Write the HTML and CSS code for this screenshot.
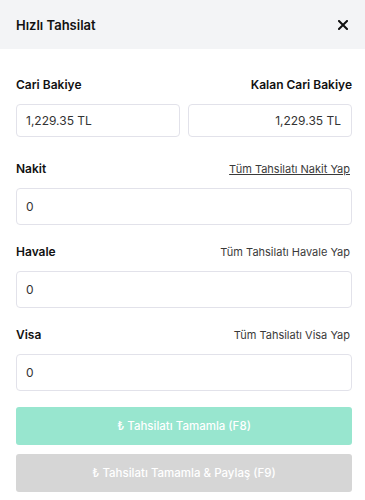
FILE: index.html
```html
<!DOCTYPE html>
<html lang="tr">
<head>
    <meta charset="UTF-8">
    <meta name="viewport" content="width=device-width, initial-scale=1.0">
    <title>Hızlı Tahsilat</title>
    <link rel="stylesheet" href="styles.css">
</head>
<body>
    <div class="modal">
        <div class="modal-header">
            <span class="modal-title">Hızlı Tahsilat</span>
            <button class="close-button" aria-label="Kapat">
                <svg width="10" height="10" viewBox="0 0 10 10">
                    <path d="M1 1 L9 9 M9 1 L1 9" stroke="#111" stroke-width="2" stroke-linecap="square"/>
                </svg>
            </button>
        </div>

        <div class="modal-body">
            <div class="balance-row">
                <div class="balance-col">
                    <div class="field-label">Cari Bakiye</div>
                    <input type="text" class="balance-input" value="1,229.35 TL" readonly>
                </div>
                <div class="balance-col align-right">
                    <div class="field-label">Kalan Cari Bakiye</div>
                    <input type="text" class="balance-input text-right" value="1,229.35 TL" readonly>
                </div>
            </div>

            <div class="field-group first">
                <div class="field-head">
                    <span class="field-label">Nakit</span>
                    <a href="#" class="field-link underlined">Tüm Tahsilatı Nakit Yap</a>
                </div>
                <input type="text" class="amount-input" value="0">
            </div>

            <div class="field-group">
                <div class="field-head">
                    <span class="field-label">Havale</span>
                    <a href="#" class="field-link">Tüm Tahsilatı Havale Yap</a>
                </div>
                <input type="text" class="amount-input" value="0">
            </div>

            <div class="field-group">
                <div class="field-head">
                    <span class="field-label">Visa</span>
                    <a href="#" class="field-link">Tüm Tahsilatı Visa Yap</a>
                </div>
                <input type="text" class="amount-input" value="0">
            </div>

            <div class="actions">
                <button class="action-button complete-button" disabled>₺ Tahsilatı Tamamla (F8)</button>
                <button class="action-button share-button" disabled>₺ Tahsilatı Tamamla &amp; Paylaş (F9)</button>
            </div>
        </div>
    </div>
</body>
</html>
```

FILE: styles.css
```css
body {
    margin: 0;
    font-family: Inter, "Noto Sans", sans-serif;
    background-color: #ffffff;
    color: #111111;
}
.modal {
    width: 365px;
}
.modal-header {
    height: 49px;
    background-color: #f3f4f6;
    display: flex;
    align-items: center;
    justify-content: space-between;
    padding: 0 12px 0 16px;
    box-sizing: border-box;
}
.modal-title {
    font-size: 13px;
    font-weight: 600;
    color: #111;
}
.close-button {
    border: none;
    background: none;
    padding: 0;
    width: 20px;
    height: 20px;
    display: flex;
    align-items: center;
    justify-content: center;
    cursor: pointer;
}
.modal-body {
    padding: 26px 13px 0 16px;
}
.balance-row {
    display: flex;
    gap: 8px;
}
.balance-col {
    flex: 1;
    display: flex;
    flex-direction: column;
    gap: 9px;
}
.align-right {
    align-items: flex-end;
}
.field-label {
    font-size: 12px;
    font-weight: 600;
    line-height: 20px;
    color: #111;
}
input {
    font-family: Inter, "Noto Sans", sans-serif;
    box-sizing: border-box;
    width: 100%;
    border: 1px solid #e2e2ea;
    border-radius: 4px;
    font-size: 12px;
    color: #333;
    background: #fff;
    outline: none;
}
.balance-input {
    height: 33px;
    padding: 0 10px 0 9px;
}
.text-right {
    text-align: right;
}
.field-group {
    margin-top: 17px;
}
.field-group.first {
    margin-top: 22px;
}
.field-head {
    display: flex;
    justify-content: space-between;
    align-items: center;
    height: 20px;
    margin-bottom: 9px;
}
.field-link {
    font-size: 11px;
    color: #3a3a3a;
    text-decoration: none;
    margin-right: 2px;
}
.field-link.underlined {
    text-decoration: underline;
}
.amount-input {
    height: 37px;
    padding: 0 9px;
}
.actions {
    margin-top: 16px;
    display: flex;
    flex-direction: column;
    gap: 9px;
}
.action-button {
    font-family: Inter, "Noto Sans", sans-serif;
    height: 38px;
    border: none;
    border-radius: 3px;
    color: #fff;
    font-size: 11.5px;
    font-weight: 500;
}
.complete-button {
    background-color: #98e6cf;
}
.share-button {
    background-color: #d6d6d6;
}
```
